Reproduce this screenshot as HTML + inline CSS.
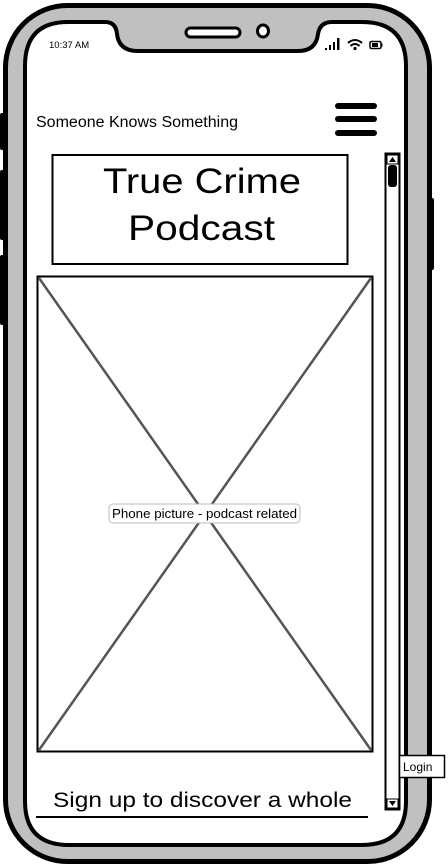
<!DOCTYPE html>
<html><head><meta charset="utf-8"><style>
html,body{margin:0;padding:0;background:#fff;width:448px;height:867px;overflow:hidden}
svg{display:block}
text{font-family:"Liberation Sans",sans-serif}
</style></head><body>
<svg width="448" height="867" viewBox="0 0 448 867" xmlns="http://www.w3.org/2000/svg">
<rect x="0" y="113" width="6" height="37" rx="2" fill="#000"/>
<rect x="0" y="170" width="6" height="70" rx="2" fill="#000"/>
<rect x="0" y="255" width="6" height="70" rx="2" fill="#000"/>
<rect x="428" y="198" width="6" height="72" rx="2" fill="#000"/>
<rect x="5.5" y="5.5" width="424" height="856" rx="62" fill="#c0c0c0" stroke="#000" stroke-width="5"/>
<path d="M68 22 L105 22 Q116 22 117 34 Q119 51 138 51 L298 51 Q316 51 318 34 Q320 22 332 22 L362 22 Q406 22 406 66 L406 801 Q406 845 362 845 L69 845 Q25 845 25 801 L25 66 Q25 22 68 22 Z" fill="#fff" stroke="#000" stroke-width="4"/>
<rect x="186" y="28" width="54" height="9" rx="4.5" fill="#fff" stroke="#000" stroke-width="3"/>
<ellipse cx="263" cy="31" rx="5.5" ry="6" fill="#fff" stroke="#000" stroke-width="3"/>
<text x="49" y="48" font-size="9.5" fill="#000">10:37 AM</text>
<rect x="325" y="48" width="2" height="2" fill="#000"/>
<rect x="329" y="45" width="2" height="5" fill="#000"/>
<rect x="333" y="42" width="2" height="8" fill="#000"/>
<rect x="337" y="38" width="2.5" height="12" fill="#000"/>
<path d="M348 43 Q355 37 362 43 M350.5 46 Q355 42 359.5 46" stroke="#000" stroke-width="2" fill="none"/>
<circle cx="355" cy="48.5" r="1.6" fill="#000"/>
<rect x="370" y="41.5" width="11" height="7" rx="1.5" fill="#fff" stroke="#000" stroke-width="1.5"/>
<rect x="372" y="43" width="6" height="4" fill="#000"/>
<rect x="381" y="43.5" width="1.5" height="3" fill="#000"/>
<text x="36" y="127" font-size="15.5" fill="#000" textLength="202" lengthAdjust="spacingAndGlyphs">Someone Knows Something</text>
<rect x="335" y="103" width="42" height="6" rx="3" fill="#000"/>
<rect x="335" y="116" width="42" height="6" rx="3" fill="#000"/>
<rect x="335" y="130" width="42" height="6" rx="3" fill="#000"/>
<rect x="52.5" y="155" width="295" height="109" fill="#fff" stroke="#000" stroke-width="2"/>
<text x="103" y="193" font-size="35" fill="#000" textLength="198" lengthAdjust="spacingAndGlyphs">True Crime</text>
<text x="128" y="240" font-size="35" fill="#000" textLength="147" lengthAdjust="spacingAndGlyphs">Podcast</text>
<rect x="37.5" y="276.5" width="335" height="475" fill="#fff" stroke="#000" stroke-width="2"/>
<line x1="39" y1="278" x2="371" y2="750" stroke="#555" stroke-width="2.5"/>
<line x1="371" y1="278" x2="39" y2="750" stroke="#555" stroke-width="2.5"/>
<rect x="109" y="504" width="191" height="19" rx="4" fill="#fff" stroke="#bbb" stroke-width="1"/>
<text x="112" y="518" font-size="12.5" fill="#000" textLength="185" lengthAdjust="spacingAndGlyphs">Phone picture - podcast related</text>
<text x="53" y="807" font-size="21.5" fill="#000" textLength="299" lengthAdjust="spacingAndGlyphs">Sign up to discover a whole</text>
<line x1="36" y1="817" x2="368" y2="817" stroke="#000" stroke-width="2"/>
<rect x="385.5" y="153.5" width="14" height="656" fill="#fff" stroke="#000" stroke-width="2"/>
<rect x="387" y="155" width="11" height="9" fill="#fff" stroke="#000" stroke-width="1"/>
<path d="M389 162 L392.5 157 L396 162 Z" fill="#000"/>
<rect x="388" y="165" width="9" height="22" rx="3" fill="#000"/>
<rect x="387" y="799" width="11" height="9" fill="#fff" stroke="#000" stroke-width="1"/>
<path d="M389 801 L392.5 806 L396 801 Z" fill="#000"/>
<rect x="399.5" y="755.5" width="45" height="22" fill="#fff" stroke="#000" stroke-width="1.5"/>
<text x="403" y="771" font-size="12" fill="#000">Login</text>
</svg>
</body></html>
